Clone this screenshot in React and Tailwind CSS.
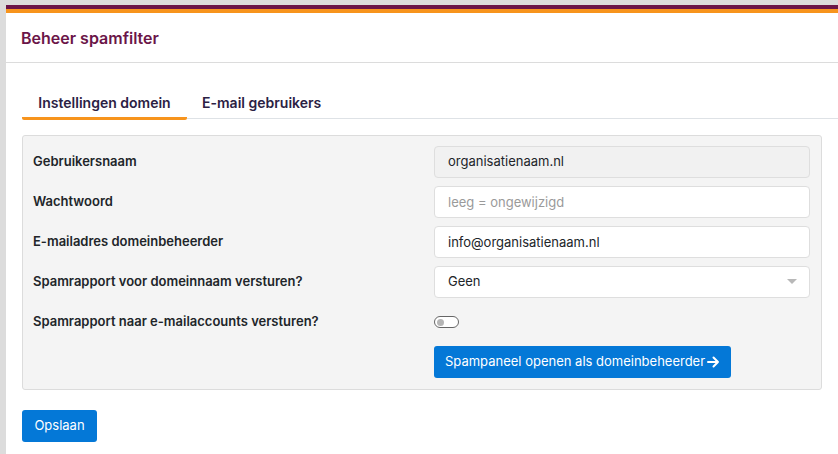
import { useState } from "react";

export default function App() {
  const [enabled, setEnabled] = useState(false);

  const label = "text-[13px] font-semibold text-[#212529]";
  const input =
    "w-full h-[32px] px-[13px] border border-[#dedede] rounded-[4px] text-[13px] text-[#212529] outline-none";

  return (
    <div className="min-h-screen w-full bg-[#dcdcdc] pl-[6px] pt-[5px] font-['Inter',sans-serif]">
      <div className="bg-white h-[449px]">
        {/* Top bars */}
        <div className="h-[4px] bg-[#6b1548]" />
        <div className="h-[4px] bg-[#f7941d]" />

        {/* Header */}
        <div className="h-[50px] flex items-center pl-[15px] border-b border-[#dcdcdc]">
          <h1 className="text-[16px] font-semibold text-[#6b1548]">Beheer spamfilter</h1>
        </div>

        {/* Tabs */}
        <div className="mt-[23px] ml-[16px] flex border-b border-[#dee2e6] h-[33px]">
          <div className="w-[165px] flex justify-center pt-[6px] border-b-[3px] border-[#f7941d] rounded-b-[2px] -mb-[2px] text-[14px] font-semibold text-[#2b2143]">
            Instellingen domein
          </div>
          <div className="pl-[15px] pt-[6px] text-[14px] font-semibold text-[#2b2143]">
            E-mail gebruikers
          </div>
        </div>

        {/* Form card */}
        <div className="mt-[16px] ml-[16px] w-[800px] h-[255px] bg-[#f4f4f4] border border-[#dcdcdc] rounded-[3px] pl-[10px] pr-[11px] pt-[10px]">
          <div className="grid grid-cols-[401px_1fr] gap-y-[8px] items-center">
            <div className={label}>Gebruikersnaam</div>
            <div className={input + " bg-[#f1f1f1] flex items-center"}>organisatienaam.nl</div>

            <div className={label}>Wachtwoord</div>
            <input type="password" placeholder="leeg = ongewijzigd" className={input + " bg-white placeholder:text-[#9a9a9a]"} />

            <div className={label}>E-mailadres domeinbeheerder</div>
            <input type="text" defaultValue="info@organisatienaam.nl" className={input + " bg-white"} />

            <div className={label}>Spamrapport voor domeinnaam versturen?</div>
            <div className={input + " bg-white flex items-center justify-between"}>
              <span>Geen</span>
              <svg width="10" height="6" viewBox="0 0 10 6" className="mr-[-1px]">
                <path d="M0 0 L10 0 L5 5 Z" fill="#b8b8b8" />
              </svg>
            </div>

            <div className={label + " h-[32px] flex items-center"}>Spamrapport naar e-mailaccounts versturen?</div>
            <div className="h-[32px] flex items-center">
              <button
                type="button"
                onClick={() => setEnabled(!enabled)}
                className="w-[25px] h-[12px] rounded-full border border-[#666] bg-white flex items-center px-[2px]"
              >
                <span className="w-[7px] h-[7px] rounded-full bg-[#b5b5b5]" />
              </button>
            </div>

            <div />
            <div>
              <button
                type="button"
                className="h-[32px] px-[11px] rounded-[3px] bg-[#0478d7] text-white text-[13px] flex items-center gap-[2px]"
              >
                Spampaneel openen als domeinbeheerder
                <svg width="13" height="12" viewBox="0 0 13 12" fill="none">
                  <path d="M1 6 H11 M6.5 1.5 L11 6 L6.5 10.5" stroke="white" strokeWidth="2" strokeLinecap="round" strokeLinejoin="round" />
                </svg>
              </button>
            </div>
          </div>
        </div>

        {/* Save */}
        <div className="mt-[20px] ml-[16px]">
          <button type="button" className="h-[32px] w-[75px] rounded-[3px] bg-[#0478d7] text-white text-[13px]">
            Opslaan
          </button>
        </div>
      </div>
    </div>
  );
}
